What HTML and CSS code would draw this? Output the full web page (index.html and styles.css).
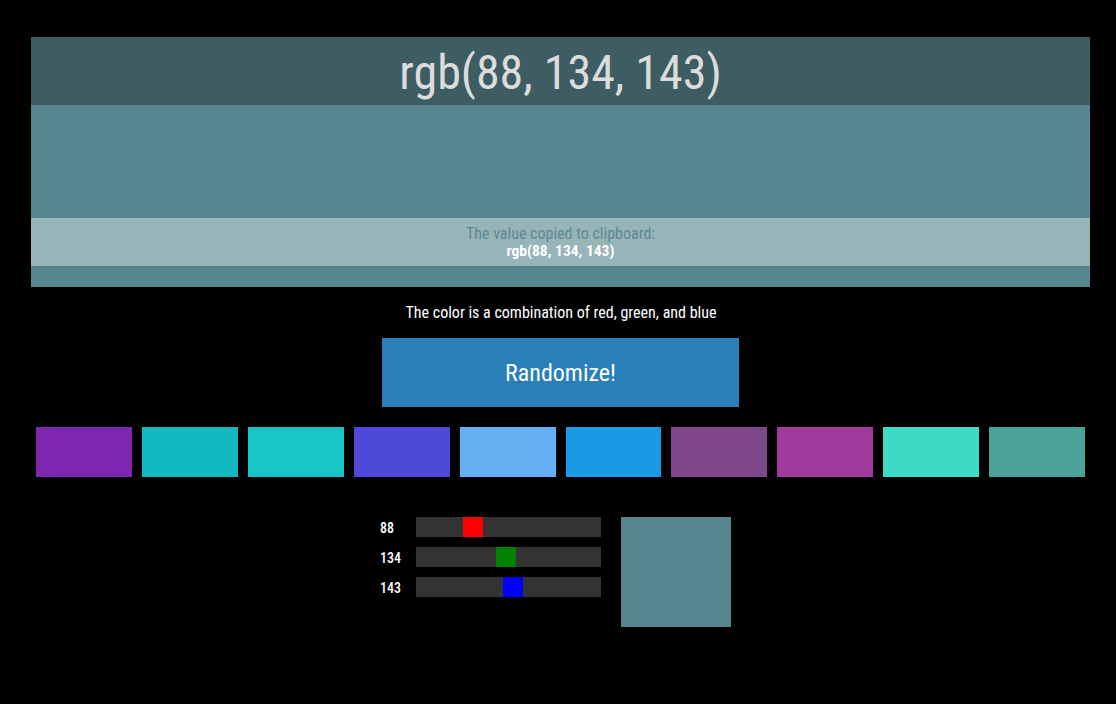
FILE: index.html
```html
<!DOCTYPE html>
<html>
<head>
<meta charset="utf-8">
<link rel="stylesheet" href="styles.css">
</head>
<body>
<div class="page">
  <section class="display">
    <h1 class="title">rgb(88, 134, 143)</h1>
    <div class="spacer"></div>
    <div class="copied">
      <div class="copied-label">The value copied to clipboard:</div>
      <div class="copied-value">rgb(88, 134, 143)</div>
    </div>
    <div class="tail"></div>
  </section>
  <p class="hint">The color is a combination of red, green, and blue</p>
  <div class="btn-row"><button class="randomize">Randomize!</button></div>
  <div class="swatches">
    <div class="swatch" style="background:#7e26b0"></div>
    <div class="swatch" style="background:#13b9c0"></div>
    <div class="swatch" style="background:#17c6c8"></div>
    <div class="swatch" style="background:#4f49da"></div>
    <div class="swatch" style="background:#66aff2"></div>
    <div class="swatch" style="background:#1a9ae4"></div>
    <div class="swatch" style="background:#7f488c"></div>
    <div class="swatch" style="background:#a03a9e"></div>
    <div class="swatch" style="background:#3ddac6"></div>
    <div class="swatch" style="background:#4aa298"></div>
  </div>
  <div class="mixer">
    <div class="sliders">
      <div class="slider-row">
        <span class="val">88</span>
        <div class="track"><div class="thumb red" style="left:47px"></div></div>
      </div>
      <div class="slider-row">
        <span class="val">134</span>
        <div class="track"><div class="thumb green" style="left:80px"></div></div>
      </div>
      <div class="slider-row">
        <span class="val">143</span>
        <div class="track"><div class="thumb blue" style="left:87px"></div></div>
      </div>
    </div>
    <div class="preview"></div>
  </div>
</div>
</body>
</html>
```
FILE: styles.css
```css
html, body {
  margin: 0;
  padding: 0;
  background: #000;
}
body {
  font-family: Roboto, "Liberation Sans", sans-serif;
  font-stretch: 75%;
  color: #fff;
}
.page {
  padding: 37px 26px 0 31px;
}
.display {
  background: #58868f;
  display: flex;
  flex-direction: column;
}
.title {
  margin: 0;
  height: 68px;
  background: rgba(0, 0, 0, 0.3);
  color: #dcdcdc;
  font-weight: 400;
  font-size: 48px;
  line-height: 72px;
  text-align: center;
}
.spacer {
  height: 113px;
}
.copied {
  height: 48px;
  background: rgba(255, 255, 255, 0.38);
  text-align: center;
  display: flex;
  flex-direction: column;
  justify-content: center;
}
.copied-label {
  color: #5c8a92;
  font-size: 16px;
  line-height: 18px;
}
.copied-value {
  color: #fff;
  font-weight: 700;
  font-size: 15.5px;
  line-height: 17px;
}
.tail {
  height: 21px;
}
.hint {
  margin: 17px 0 0;
  padding-left: 1px;
  text-align: center;
  font-size: 16px;
  line-height: 18px;
}
.btn-row {
  display: flex;
  justify-content: center;
  margin-top: 16px;
  padding-left: 1px;
  padding-right: 1px;
}
.randomize {
  width: 357px;
  height: 69px;
  border: 0;
  padding: 0;
  background: #2a7fb8;
  color: #fff;
  font-family: inherit;
  font-stretch: 75%;
  font-size: 24px;
}
.swatches {
  display: flex;
  gap: 10px;
  width: 1049px;
  margin: 20px 0 0 5px;
}
.swatch {
  flex: 1;
  height: 50px;
}
.mixer {
  display: flex;
  margin: 40px 0 0 349px;
  gap: 20px;
}
.sliders {
  display: flex;
  flex-direction: column;
  gap: 10px;
}
.slider-row {
  display: flex;
  align-items: center;
  height: 20px;
}
.val {
  width: 36px;
  font-size: 14px;
  font-weight: 500;
  line-height: 20px;
  padding-top: 1px;
}
.track {
  position: relative;
  width: 185px;
  height: 20px;
  background: #333;
}
.thumb {
  position: absolute;
  top: 0;
  width: 20px;
  height: 20px;
}
.red { background: #f00; }
.green { background: #008000; }
.blue { background: #00f; }
.preview {
  width: 110px;
  height: 110px;
  background: #58868f;
}
```
